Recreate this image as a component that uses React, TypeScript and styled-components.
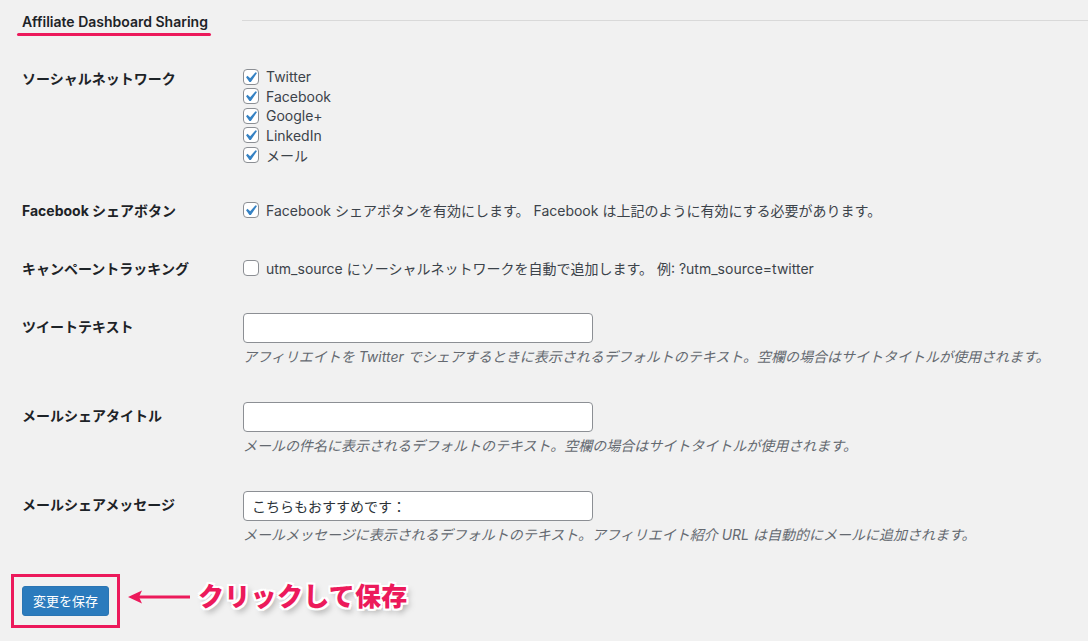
import React from 'react';
import styled, { createGlobalStyle } from 'styled-components';

const GlobalStyle = createGlobalStyle`
  html, body {
    margin: 0;
    padding: 0;
    background: #f1f1f1;
  }
  body {
    font-family: Inter, "Noto Sans CJK JP", sans-serif;
    color: #3c434a;
    font-size: 14px;
  }
`;

const Page = styled.div`
  min-height: 641px;
  background: #f1f1f1;
  padding: 0 22px;
  box-sizing: border-box;
`;

const HeaderBar = styled.div`
  display: flex;
  align-items: flex-start;
  height: 48px;
  margin-left: -5px;
`;

const Tab = styled.div`
  width: 194px;
  padding-top: 12px;
`;

const TabTitle = styled.h2`
  margin: 0;
  padding-left: 5px;
  font-size: 14px;
  line-height: 20px;
  font-weight: 600;
  color: #1d2327;
`;

const TabUnderline = styled.div`
  margin-top: 1px;
  height: 3px;
  border-radius: 2px;
  background: #ec1a5b;
`;

const HeaderRule = styled.div`
  flex: 1;
  margin: 20px -22px 0 31px;
  height: 1px;
  background: #d9d9d9;
`;

const Row = styled.div`
  display: grid;
  grid-template-columns: 221px 1fr;
  align-items: start;
  padding: 17px 0;
`;

const Label = styled.div`
  padding-top: 4px;
  font-size: 14px;
  line-height: 20px;
  font-weight: 700;
  color: #1d2327;
`;

const CheckList = styled.div`
  display: flex;
  flex-direction: column;
  margin: 2px 0 -2px;
`;

const CheckItem = styled.label<{ single?: boolean }>`
  display: flex;
  align-items: center;
  height: ${({ single }) => (single ? '20px' : '19.5px')};
  margin-top: ${({ single }) => (single ? '3px' : '0')};
  font-size: 14px;
  color: #3c434a;
  white-space: nowrap;
`;

const Box = styled.span`
  display: inline-flex;
  width: 16px;
  height: 16px;
  box-sizing: border-box;
  margin-right: 7px;
  border: 1px solid #8c8f94;
  border-radius: 4px;
  background: #fff;
  flex-shrink: 0;
`;

const TextInput = styled.input`
  display: block;
  width: 350px;
  height: 30px;
  box-sizing: border-box;
  margin: 0;
  padding: 0 8px;
  border: 1px solid #8c8f94;
  border-radius: 4px;
  background: #fff;
  font-family: Inter, "Noto Sans CJK JP", sans-serif;
  font-size: 14px;
  color: #2c3338;
  outline: none;
`;

const Description = styled.p`
  margin: 3px 0 0;
  font-size: 14px;
  line-height: 22px;
  font-style: italic;
  color: #646970;
  white-space: nowrap;
`;

const SubmitRow = styled.div`
  display: flex;
  align-items: center;
  margin: 11px 0 0 -11px;
`;

const Highlight = styled.div`
  border: 3px solid #ec1a5b;
  padding: 9px 8px;
`;

const SaveButton = styled.button`
  display: block;
  height: 30px;
  padding: 0 10px;
  border: 1px solid #2a75b3;
  border-radius: 3px;
  background: #2b7bbd;
  color: #fff;
  font-family: Inter, "Noto Sans CJK JP", sans-serif;
  font-size: 13px;
  cursor: pointer;
`;

const Arrow = styled.svg`
  margin: 0 8px 8px 8px;
  flex-shrink: 0;
`;

const Callout = styled.span`
  margin-bottom: 12px;
  font-family: "Noto Sans CJK JP", sans-serif;
  font-size: 26px;
  font-weight: 900;
  letter-spacing: 0.3px;
  color: #ec1a5b;
  text-shadow: -2px 0 #fff, 2px 0 #fff, 0 -2px #fff, 0 2px #fff, -2px -2px #fff,
    2px 2px #fff, -2px 2px #fff, 2px -2px #fff, 3px 4px 6px rgba(0, 0, 0, 0.35);
`;

const Check = ({ on }: { on: boolean }) => (
  <Box>
    {on && (
      <svg width="14" height="14" viewBox="3.81 2.86 13.33 13.33">
        <path
          d="M14.83 4.89l1.34.94-5.81 8.38H9.02L5.78 9.67l1.34-1.25 2.57 2.4z"
          fill="#3582c4"
        />
      </svg>
    )}
  </Box>
);

const networks = ['Twitter', 'Facebook', 'Google+', 'LinkedIn', 'メール'];

const textFields = [
  {
    label: 'ツイートテキスト',
    value: '',
    help: 'アフィリエイトを Twitter でシェアするときに表示されるデフォルトのテキスト。空欄の場合はサイトタイトルが使用されます。',
  },
  {
    label: 'メールシェアタイトル',
    value: '',
    help: 'メールの件名に表示されるデフォルトのテキスト。空欄の場合はサイトタイトルが使用されます。',
  },
  {
    label: 'メールシェアメッセージ',
    value: 'こちらもおすすめです：',
    help: 'メールメッセージに表示されるデフォルトのテキスト。アフィリエイト紹介 URL は自動的にメールに追加されます。',
  },
];

const App: React.FC = () => (
  <Page>
    <GlobalStyle />
    <HeaderBar>
      <Tab>
        <TabTitle>Affiliate Dashboard Sharing</TabTitle>
        <TabUnderline />
      </Tab>
      <HeaderRule />
    </HeaderBar>

    <Row>
      <Label>ソーシャルネットワーク</Label>
      <CheckList>
        {networks.map((name) => (
          <CheckItem key={name}>
            <Check on />
            {name}
          </CheckItem>
        ))}
      </CheckList>
    </Row>

    <Row>
      <Label>Facebook シェアボタン</Label>
      <CheckItem single>
        <Check on />
        Facebook シェアボタンを有効にします。 Facebook は上記のように有効にする必要があります。
      </CheckItem>
    </Row>

    <Row>
      <Label>キャンペーントラッキング</Label>
      <CheckItem single>
        <Check on={false} />
        utm_source にソーシャルネットワークを自動で追加します。 例: ?utm_source=twitter
      </CheckItem>
    </Row>

    {textFields.map((field) => (
      <Row key={field.label}>
        <Label>{field.label}</Label>
        <div>
          <TextInput type="text" defaultValue={field.value} />
          <Description>{field.help}</Description>
        </div>
      </Row>
    ))}

    <SubmitRow>
      <Highlight>
        <SaveButton>変更を保存</SaveButton>
      </Highlight>
      <Arrow width="62" height="14" viewBox="0 0 62 14">
        <polygon points="0,7 14,0.5 11,7 14,13.5" fill="#ec1a5b" />
        <rect x="10" y="5.5" width="52" height="3" fill="#ec1a5b" />
      </Arrow>
      <Callout>クリックして保存</Callout>
    </SubmitRow>
  </Page>
);

export default App;
